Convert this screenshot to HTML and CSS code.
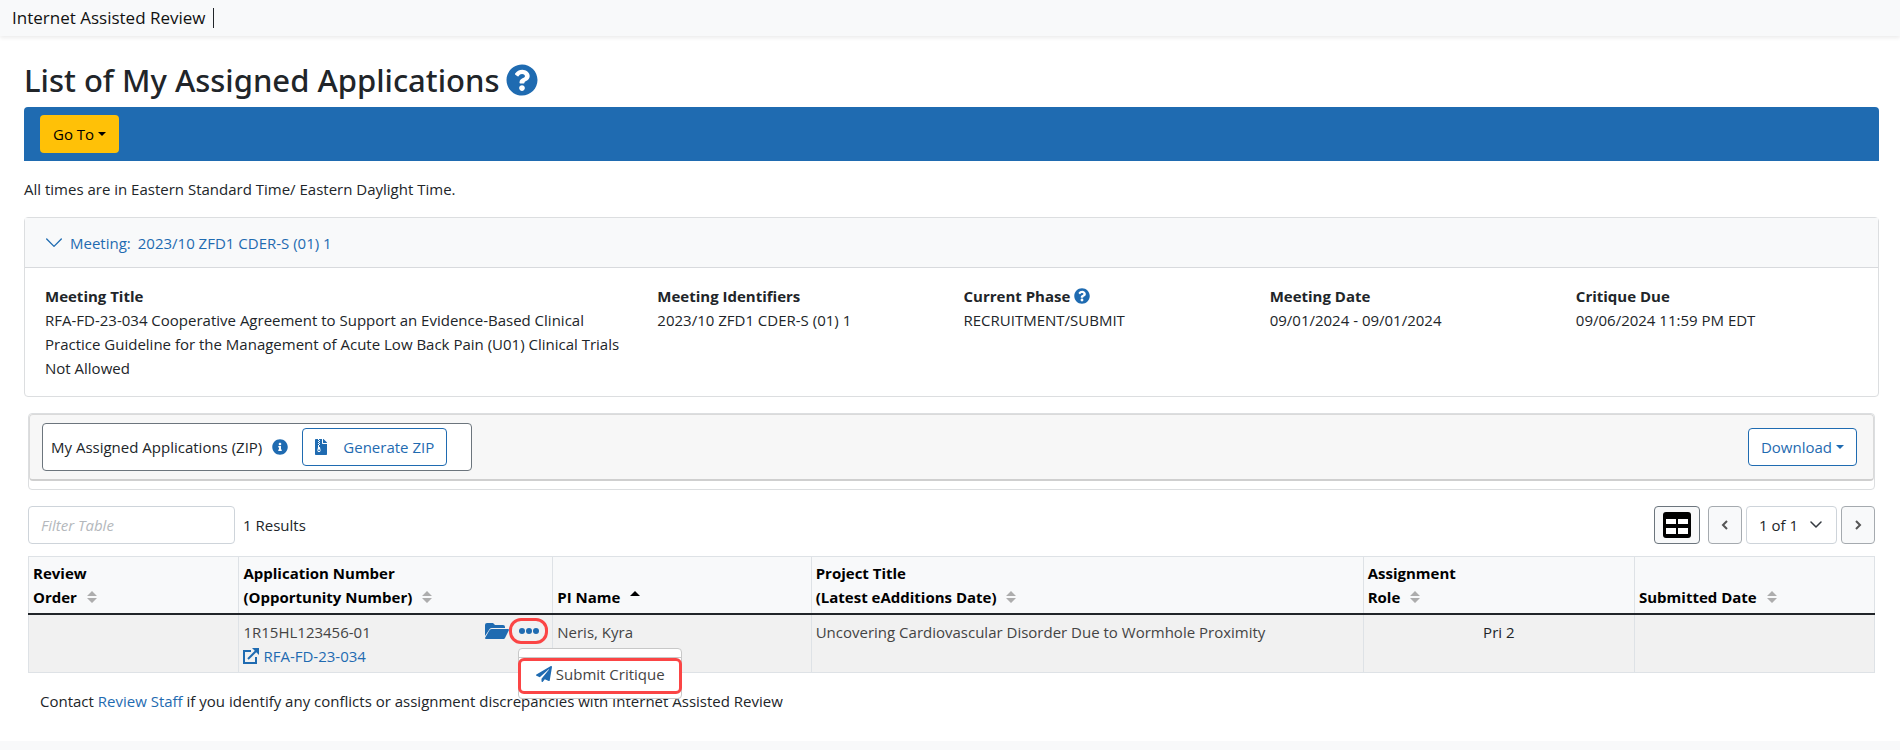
FILE: index.html
```html
<!DOCTYPE html>
<html lang="en">

<head>
    <meta charset="UTF-8">
    <meta name="viewport" content="width=device-width, initial-scale=1.0">
    <title>List of My Assigned Applications</title>
    <link rel="stylesheet" href="styles.css">
</head>

<body>
    <header class="topbar">
        <span class="topbar-title">Internet Assisted Review</span>
    </header>

    <main class="page">
        <div class="page-title">
            <h1>List of My Assigned Applications</h1>
            <a href="#" class="help" aria-label="Help">
                <svg width="32" height="32" viewBox="0 0 512 512" fill="currentColor"><path d="M504 256c0 137-111 248-248 248S8 393 8 256 119 8 256 8s248 111 248 248zM262.700 90c-54.500 0-89.300 23-116.500 63.800-3.500 5.300-2.400 12.400 2.700 16.300l34.700 26.300c5.200 3.900 12.600 3 16.700-2.100 17.900-22.700 30.100-35.800 57.300-35.800 20.400 0 45.700 13.100 45.700 33 0 15-12.400 22.700-32.500 34C247.100 238.500 216 254.900 216 296v4c0 6.600 5.400 12 12 12h56c6.600 0 12-5.400 12-12v-1.300c0-28.500 83.200-29.600 83.200-106.700 0-58-60.200-102-116.500-102zM256 338c-25.400 0-46 20.600-46 46s20.600 46 46 46 46-20.600 46-46-20.600-46-46-46z"/></svg>
            </a>
        </div>

        <nav class="navbar">
            <button type="button" class="btn btn-warning">Go To<span class="caret"></span></button>
        </nav>

        <p class="times-note">All times are in Eastern Standard Time/ Eastern Daylight Time.</p>

        <section class="card">
            <div class="card-header">
                <a href="#meeting-details">
                    <svg width="18" height="18" viewBox="0 0 16 16" fill="none" stroke="currentColor" stroke-width="1.200" stroke-linecap="round" stroke-linejoin="round"><path d="M1.500 4.500 8 11l6.500-6.500"/></svg>
                    <span>Meeting:</span>
                    <span>2023/10 ZFD1 CDER-S (01) 1</span>
                </a>
            </div>
            <dl class="card-body" id="meeting-details">
                <div>
                    <dt>Meeting Title</dt>
                    <dd>RFA-FD-23-034 Cooperative Agreement to Support an Evidence-Based Clinical Practice Guideline for the Management of Acute Low Back Pain (U01) Clinical Trials Not Allowed</dd>
                </div>
                <div>
                    <dt>Meeting Identifiers</dt>
                    <dd>2023/10 ZFD1 CDER-S (01) 1</dd>
                </div>
                <div>
                    <dt>Current Phase
                        <a href="#" class="help" aria-label="Phase help">
                            <svg width="16" height="16" viewBox="0 0 512 512" fill="currentColor"><path d="M504 256c0 137-111 248-248 248S8 393 8 256 119 8 256 8s248 111 248 248zM262.700 90c-54.500 0-89.300 23-116.500 63.800-3.500 5.300-2.400 12.400 2.700 16.300l34.700 26.300c5.200 3.900 12.600 3 16.700-2.100 17.900-22.700 30.100-35.800 57.300-35.800 20.400 0 45.700 13.100 45.700 33 0 15-12.400 22.700-32.500 34C247.100 238.500 216 254.900 216 296v4c0 6.600 5.400 12 12 12h56c6.600 0 12-5.400 12-12v-1.300c0-28.500 83.200-29.600 83.200-106.700 0-58-60.200-102-116.500-102zM256 338c-25.400 0-46 20.600-46 46s20.600 46 46 46 46-20.600 46-46-20.600-46-46-46z"/></svg>
                        </a>
                    </dt>
                    <dd>RECRUITMENT/SUBMIT</dd>
                </div>
                <div>
                    <dt>Meeting Date</dt>
                    <dd>09/01/2024 - 09/01/2024</dd>
                </div>
                <div>
                    <dt>Critique Due</dt>
                    <dd>09/06/2024 11:59 PM EDT</dd>
                </div>
            </dl>
        </section>

        <div class="content">
            <div class="toolbar">
                <div class="toolbar-inner">
                    <div class="zip-box">
                        <span>My Assigned Applications (ZIP)</span>
                        <a href="#" class="help" aria-label="ZIP information">
                            <svg width="16" height="16" viewBox="0 0 512 512" fill="currentColor"><path d="M256 8C119 8 8 119 8 256s111 248 248 248 248-111 248-248S393 8 256 8zm0 110c23.200 0 42 18.800 42 42s-18.800 42-42 42-42-18.800-42-42 18.800-42 42-42zm56 254c0 6.600-5.400 12-12 12h-88c-6.600 0-12-5.400-12-12v-24c0-6.600 5.400-12 12-12h12v-64h-12c-6.600 0-12-5.400-12-12v-24c0-6.600 5.400-12 12-12h64c6.600 0 12 5.400 12 12v100h12c6.600 0 12 5.400 12 12v24z"/></svg>
                        </a>
                        <button type="button" class="btn btn-outline zip-btn">
                            <svg width="12" height="16" viewBox="0 0 384 512" fill="currentColor"><path fill-rule="evenodd" d="M24 0h72v32h32V0h96v136c0 13 11 24 24 24h136v328c0 13-11 24-24 24H24c-13 0-24-11-24-24V24C0 11 11 0 24 0zM128 32v32h32V32zM96 64v32h32V64zM128 96v32h32V96zM96 128v32h32v-32zM128 160v32h32v-32zM96 192v32h32v-32zM97 256 78 350c-6 35 20 66 50 66s56-31 49-66l-19-94h-30v-32h-31zM128 336c18 0 32 11 32 24s-14 24-32 24-32-11-32-24 14-24 32-24zM256 0h6c6 0 12 3 17 7l98 98c4 5 7 11 7 17v6H256z"/></svg>
                            <span>Generate ZIP</span>
                        </button>
                    </div>
                    <button type="button" class="btn btn-outline">Download<span class="caret"></span></button>
                </div>
            </div>

            <div class="table-tools">
                <input type="text" class="filter" placeholder="Filter Table" aria-label="Filter Table">
                <span class="results">1 Results</span>
                <button type="button" class="btn btn-view" aria-label="Table view">
                    <svg width="28" height="26" viewBox="0 0 28 26"><rect width="28" height="26" rx="3" fill="#000"/><path fill="#fff" d="M3 7h10v5H3zM15 7h10v5H15zM3 16h10v6H3zM15 16h10v6H15z"/></svg>
                </button>
                <div class="pager">
                    <button type="button" class="btn btn-page" aria-label="Previous page">
                        <svg width="8" height="12" viewBox="0 0 8 12" fill="none" stroke="#555" stroke-width="2"><path d="M6 2 2 6l4 4"/></svg>
                    </button>
                    <div class="page-select">
                        <select aria-label="Page">
                            <option>1 of 1</option>
                        </select>
                        <svg width="12" height="8" viewBox="0 0 12 8" fill="none" stroke="#343a40" stroke-width="1.500" stroke-linecap="round" stroke-linejoin="round"><path d="m1 1 5 5 5-5"/></svg>
                    </div>
                    <button type="button" class="btn btn-page" aria-label="Next page">
                        <svg width="8" height="12" viewBox="0 0 8 12" fill="none" stroke="#555" stroke-width="2"><path d="m2 2 4 4-4 4"/></svg>
                    </button>
                </div>
            </div>

            <table class="apps">
                <colgroup>
                    <col class="col-order">
                    <col class="col-number">
                    <col class="col-pi">
                    <col class="col-title">
                    <col class="col-role">
                    <col class="col-date">
                </colgroup>
                <thead>
                    <tr>
                        <th>Review<br>Order <svg class="sort" width="10" height="12" viewBox="0 0 10 12" fill="currentColor"><path d="M5 0l5 5H0zM0 7h10l-5 5z"/></svg></th>
                        <th>Application Number<br>(Opportunity Number) <svg class="sort" width="10" height="12" viewBox="0 0 10 12" fill="currentColor"><path d="M5 0l5 5H0zM0 7h10l-5 5z"/></svg></th>
                        <th>PI Name <svg class="sort sort-active" width="10" height="12" viewBox="0 0 10 12" fill="currentColor"><path d="M5 0l5 5H0z"/></svg></th>
                        <th>Project Title<br>(Latest eAdditions Date) <svg class="sort" width="10" height="12" viewBox="0 0 10 12" fill="currentColor"><path d="M5 0l5 5H0zM0 7h10l-5 5z"/></svg></th>
                        <th>Assignment<br>Role <svg class="sort" width="10" height="12" viewBox="0 0 10 12" fill="currentColor"><path d="M5 0l5 5H0zM0 7h10l-5 5z"/></svg></th>
                        <th>Submitted Date <svg class="sort" width="10" height="12" viewBox="0 0 10 12" fill="currentColor"><path d="M5 0l5 5H0zM0 7h10l-5 5z"/></svg></th>
                    </tr>
                </thead>
                <tbody>
                    <tr>
                        <td></td>
                        <td>
                            <div class="app-cell">
                                <div>
                                    <div>1R15HL123456-01</div>
                                    <a href="#" class="app-link">
                                        <svg width="16" height="16" viewBox="0 0 16 16" fill="none" stroke="currentColor" stroke-width="2"><path d="M8 3H1v12h12V9"/><path d="M5 11l8-8"/><path fill="currentColor" stroke="none" d="M9 0h7v7z"/></svg>
                                        <span>RFA-FD-23-034</span>
                                    </a>
                                </div>
                                <div class="actions">
                                    <a href="#" class="folder" aria-label="Open folder">
                                        <svg width="24" height="16" viewBox="0 0 24 16" fill="currentColor"><path d="M2 0h6l2 2h8a2 2 0 0 1 2 2v1H7a3 3 0 0 0-3 2L0 13V2a2 2 0 0 1 2-2z"/><path d="M7 6h16a1 1 0 0 1 1 1l-4 8a2 2 0 0 1-2 1H1a1 1 0 0 1-1-1l4-7a3 3 0 0 1 3-2z"/></svg>
                                    </a>
                                    <button type="button" class="more" aria-label="More actions">
                                        <svg width="20" height="6" viewBox="0 0 20 6" fill="currentColor"><circle cx="3" cy="3" r="3"/><circle cx="10" cy="3" r="3"/><circle cx="17" cy="3" r="3"/></svg>
                                    </button>
                                    <div class="menu">
                                        <hr>
                                        <a href="#" class="menu-item">
                                            <svg width="16" height="16" viewBox="0 0 512 512" fill="currentColor"><path d="M476 3.200 12.500 270.600c-18.100 10.400-15.800 35.600 2.200 43.200L121 358.400l287.300-253.200c5.500-4.900 13.300 2.600 8.600 8.300L176 407v80.500c0 23.600 28.500 32.900 42.500 15.800L282 426l124.600 52.200c14.200 6 30.400-2.900 33-18.200l72-432C515 7.800 493.300-6.800 476 3.200z"/></svg>
                                            <span>Submit Critique</span>
                                        </a>
                                    </div>
                                </div>
                            </div>
                        </td>
                        <td>Neris, Kyra</td>
                        <td>Uncovering Cardiovascular Disorder Due to Wormhole Proximity</td>
                        <td class="role">Pri 2</td>
                        <td></td>
                    </tr>
                </tbody>
            </table>

            <p class="contact">Contact <a href="#">Review Staff</a> if you identify any conflicts or assignment discrepancies with Internet Assisted Review</p>
        </div>
    </main>

    <footer class="footer"></footer>
</body>

</html>
```
FILE: styles.css
```css
* {
    box-sizing: border-box;
}

body {
    margin: 0;
    min-height: 100vh;
    display: flex;
    flex-direction: column;
    font-family: "Open Sans", "Noto Sans", sans-serif;
    font-size: 15px;
    line-height: 24px;
    color: #212529;
    background-color: #fff;
}

a {
    color: #1f6bb1;
    text-decoration: none;
}

a:hover {
    text-decoration: underline;
}

svg {
    display: block;
    flex-shrink: 0;
}

.topbar {
    display: flex;
    align-items: center;
    height: 36px;
    padding: 0 12px;
    background-color: #f8f9fa;
    box-shadow: 0 2px 4px rgba(0, 0, 0, 0.08);
}

.topbar-title {
    padding-right: 8px;
    border-right: 1px solid #212529;
    font-size: 17px;
    font-weight: 500;
    line-height: 20px;
    color: #111;
}

.page {
    padding: 24px 21px 0 24px;
}

.page-title {
    display: flex;
    align-items: center;
    gap: 6px;
    height: 40px;
    margin-bottom: 7px;
}

.page-title h1 {
    margin: 0;
    font-family: "Noto Sans", "Open Sans", sans-serif;
    font-size: 31px;
    font-weight: 500;
    line-height: 40px;
}

.navbar {
    padding: 8px 16px;
    background-color: #1f6bb1;
    border-radius: 4px 4px 0 0;
}

.btn {
    display: inline-flex;
    align-items: center;
    justify-content: center;
    height: 38px;
    padding: 0 12px;
    border: 1px solid transparent;
    border-radius: 4px;
    font-family: inherit;
    font-size: 15px;
    line-height: 24px;
    cursor: pointer;
}

.btn-warning {
    background-color: #ffc107;
    color: #000;
}

.btn-outline {
    background-color: #fff;
    border-color: #1f6bb1;
    color: #1f6bb1;
}

.caret {
    margin-left: 4px;
    border-top: 4px solid currentColor;
    border-left: 4px solid transparent;
    border-right: 4px solid transparent;
}

.times-note {
    margin: 16px 0;
}

.card {
    border: 1px solid #dcdee0;
    border-radius: 4px;
}

.card-header {
    padding: 13px 20px 12px;
    background-color: #f8f9fa;
    border-bottom: 1px solid #d8dadd;
}

.card-header a {
    display: flex;
    align-items: center;
    gap: 7px;
}

.card-body {
    display: grid;
    grid-template-columns: 2fr repeat(4, 1fr);
    margin: 0;
    padding: 16px 8px;
}

.card-body > div {
    padding: 0 12px;
}

.card-body dt {
    display: flex;
    align-items: center;
    gap: 4px;
    font-weight: 700;
}

.card-body dd {
    margin: 0;
}

.content {
    padding: 16px 4px 0;
}

.toolbar {
    padding-bottom: 8px;
    border: 1px solid #dcdee0;
    border-radius: 4px;
}

.toolbar-inner {
    display: flex;
    align-items: center;
    justify-content: space-between;
    padding: 8px 16px 8px 12px;
    background-color: #f7f7f7;
    border: 1px solid #dadada;
    border-bottom: 2px solid #cfcfcf;
    border-radius: 4px;
}

.zip-box {
    display: flex;
    align-items: center;
    gap: 10px;
    height: 48px;
    padding: 0 24px 0 8px;
    background-color: #fff;
    border: 1px solid #6c757d;
    border-radius: 4px;
}

.zip-btn {
    gap: 16px;
    margin-left: 4px;
}

.table-tools {
    display: flex;
    align-items: center;
    gap: 8px;
    padding: 16px 0 12px;
}

.filter {
    width: 207px;
    height: 38px;
    padding: 0 12px;
    border: 1px solid #ced4da;
    border-radius: 4px;
    font-family: inherit;
    font-size: 15px;
}

.filter::placeholder {
    color: #b4b8bc;
    font-style: italic;
}

.btn-view {
    margin-left: auto;
    padding: 0 8px;
    background-color: #f8f9fa;
    border-color: #6c757d;
}

.pager {
    display: flex;
    gap: 4px;
}

.btn-page {
    width: 34px;
    padding: 0;
    background-color: #f8f9fa;
    border-color: #a5aaaf;
}

.page-select {
    position: relative;
}

.page-select select {
    width: 91px;
    height: 38px;
    padding: 0 12px;
    appearance: none;
    background-color: #fff;
    border: 1px solid #ced4da;
    border-radius: 4px;
    font-family: inherit;
    font-size: 15px;
    color: #212529;
}

.page-select svg {
    position: absolute;
    top: 15px;
    right: 15px;
    pointer-events: none;
}

.apps {
    width: 100%;
    table-layout: fixed;
    border-collapse: collapse;
}

.col-order {
    width: 11.4%;
}

.col-number {
    width: 17%;
}

.col-pi {
    width: 14%;
}

.col-title {
    width: 29.9%;
}

.col-role {
    width: 14.7%;
}

.col-date {
    width: 13%;
}

.apps th,
.apps td {
    padding: 4px;
    border: 1px solid #dee2e6;
    text-align: left;
}

.apps th {
    background-color: #f8f9fa;
    border-bottom: 2px solid #212529;
    color: #000;
    font-weight: 700;
    vertical-align: bottom;
}

.apps td {
    height: 58px;
    padding-top: 5px;
    background-color: #f1f1f1;
    color: #444;
    vertical-align: top;
}

.apps .role {
    color: #212529;
    text-align: center;
}

.sort {
    display: inline-block;
    margin-left: 6px;
    color: #adadad;
}

.sort-active {
    color: #000;
}

.app-cell {
    display: flex;
    justify-content: space-between;
    align-items: flex-start;
}

.app-link {
    display: flex;
    align-items: center;
    gap: 4px;
}

.actions {
    position: relative;
    display: flex;
    align-items: center;
    margin-top: -2px;
}

.more {
    display: flex;
    align-items: center;
    justify-content: center;
    width: 39px;
    height: 26px;
    padding: 0;
    background: none;
    border: 3px solid #fb4545;
    border-radius: 12px;
    color: #1f6bb1;
    cursor: pointer;
}

.menu {
    position: absolute;
    top: 30px;
    left: 33px;
    z-index: 10;
    width: 164px;
    padding: 8px 0 4px;
    background-color: #fff;
    border: 1px solid #c8c8c8;
    border-radius: 4px;
}

.menu hr {
    margin: 0;
    border: 0;
    border-top: 1px solid #c8c8c8;
}

.menu-item {
    display: flex;
    align-items: center;
    justify-content: center;
    gap: 4px;
    height: 36px;
    margin: 0 -1px;
    padding-bottom: 4px;
    border: 3px solid #fb4545;
    border-radius: 6px;
    white-space: nowrap;
}

.menu-item span {
    color: #444;
}

.contact {
    margin: 16px 0 28px;
    padding: 0 12px;
}

.footer {
    flex: 1;
    background-color: #f8f9fa;
}
```
